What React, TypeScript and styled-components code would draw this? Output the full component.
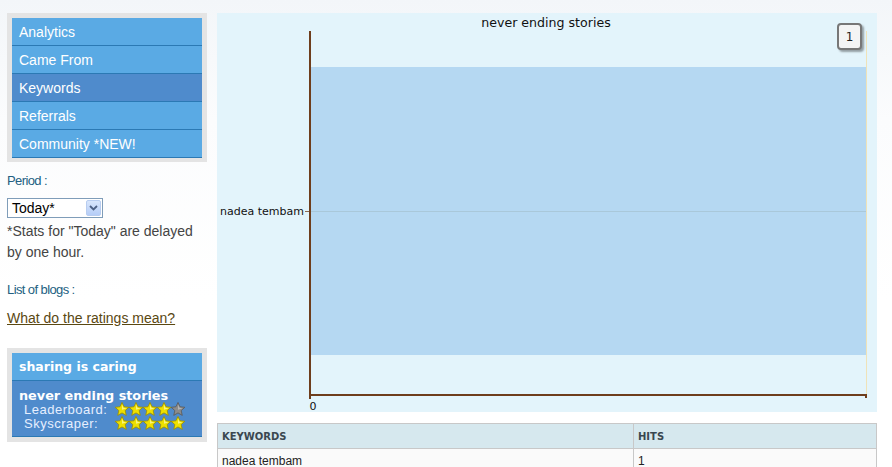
import styled, { createGlobalStyle } from "styled-components";

const GlobalStyle = createGlobalStyle`
    html, body {
        margin: 0;
        padding: 0;
    }
    body {
        background: linear-gradient(to bottom, #f3f6f9 0px, #fbfcfd 120px, #ffffff 300px);
        font-family: "Liberation Sans", Arial, sans-serif;
        min-height: 467px;
    }
`;

const NAV = ["Analytics", "Came From", "Keywords", "Referrals", "Community *NEW!"];
const ACTIVE = "Keywords";

const Page = styled.div`
    display: flex;
    align-items: flex-start;
    gap: 10px;
    padding: 13px 0 0 7px;
`;

const Sidebar = styled.div`
    width: 200px;
    display: flex;
    flex-direction: column;
`;

const GrayBox = styled.div`
    background: #e4e4e4;
    padding: 5px 5px 4px;
`;

const NavItem = styled.div<{ $active: boolean }>`
    height: 27px;
    line-height: 28px;
    padding-left: 7px;
    font-size: 14px;
    color: #fff;
    background: ${p => p.$active ? "#4f8bcc" : "#5aaae4"};
    border-bottom: 1px solid #2b79b4;
`;

const Label = styled.div<{ $gap: number }>`
    color: #235f82;
    font-size: 13px;
    letter-spacing: -0.6px;
    margin-top: ${p => p.$gap}px;
`;

const FakeSelect = styled.div`
    margin-top: 10px;
    width: 90px;
    height: 18px;
    border: 1px solid #7f9db9;
    background: #fff;
    display: flex;
    align-items: center;
    justify-content: space-between;
    font-size: 14px;
    color: #000;
    padding-left: 4px;
    box-sizing: content-box;
`;

const SelectBtn = styled.div`
    width: 15px;
    height: 16px;
    margin-right: 1px;
    background: linear-gradient(#d8e6fc, #b5cdf7);
    border: 1px solid #b8cdf0;
    border-radius: 2px;
    display: flex;
    align-items: center;
    justify-content: center;
    box-sizing: border-box;
`;

const Note = styled.div`
    font-size: 14px;
    color: #444;
    line-height: 21px;
    margin-top: 3px;
`;

const RatingLink = styled.a`
    display: block;
    margin-top: 13px;
    font-size: 14px;
    color: #5a4812;
    text-decoration: underline;
`;

const ShareBox = styled(GrayBox)`
    margin-top: 22px;
    padding: 5px 5px 5px;
`;

const ShareHead = styled.div`
    height: 27px;
    line-height: 28px;
    padding-left: 7px;
    background: #5aaae4;
    border-bottom: 1px solid #2b79b4;
    color: #fff;
    font-family: "DejaVu Sans", Verdana, sans-serif;
    font-weight: bold;
    font-size: 12.5px;
`;

const ShareBody = styled.div`
    background: #4f8bcc;
    border-bottom: 1px solid #2b79b4;
    padding: 8px 7px 0;
    height: 47px;
    color: #fff;
`;

const BlogName = styled.div`
    font-family: "DejaVu Sans", Verdana, sans-serif;
    font-weight: bold;
    font-size: 12.8px;
    line-height: 13px;
    height: 13px;
`;

const RankRow = styled.div`
    display: flex;
    align-items: center;
    height: 14px;
    padding-left: 5px;
    font-size: 13px;
    letter-spacing: 0.5px;
    line-height: 13px;
    color: #e6efff;
`;

const RankName = styled.span`
    width: 91px;
`;

const Stars = styled.span`
    display: flex;
`;

const Main = styled.div`
    width: 660px;
    display: flex;
    flex-direction: column;
    gap: 11px;
`;

const ChartWrap = styled.div`
    position: relative;
    height: 399px;
    background: #e3f4fb;
`;

const Legend = styled.div`
    position: absolute;
    left: 620px;
    top: 10px;
    width: 21px;
    height: 23px;
    border: 2px solid #777;
    border-radius: 4px;
    background: #f4f4f4;
    box-shadow: 2px 2px 2px rgba(0, 0, 0, 0.35);
    font-family: "DejaVu Sans", Verdana, sans-serif;
    font-size: 12px;
    display: flex;
    align-items: center;
    justify-content: center;
    color: #222;
`;

const Table = styled.table`
    width: 660px;
    border-collapse: collapse;
    font-family: "Liberation Sans", Arial, sans-serif;
`;

const Th = styled.th<{ $w?: number }>`
    text-align: left;
    background: #d6e8ee;
    border: 1px solid #c8c8c8;
    height: 24px;
    padding: 0 4px;
    font-family: "DejaVu Sans", Verdana, sans-serif;
    font-size: 10px;
    font-weight: bold;
    color: #3a4750;
    width: ${p => p.$w ? `${p.$w}px` : "auto"};
`;

const Td = styled.td`
    background: #fafafa;
    border: 1px solid #c8c8c8;
    height: 24px;
    padding: 0 4px;
    font-size: 12px;
    color: #222;
`;

const Star = ({ on }: { on: boolean }) => (
    <svg width="14" height="14" viewBox="1 1 22 21">
        <path
            d="M12 1.2 L15.2 8 L22.8 8.8 L17 14 L18.7 21.5 L12 17.7 L5.3 21.5 L7 14 L1.2 8.8 L8.8 8 Z"
            fill={on ? "#eee000" : "#8c8c8c"}
            stroke={on ? "#9c8f00" : "#5a5a5a"}
            strokeWidth="1.3"
            strokeLinejoin="round"
        />
        <path
            d="M12 4.5 L14.2 9.6 L19.5 10.2 L12 12.5 Z"
            fill={on ? "#fffbb0" : "#c8c8c8"}
            opacity="0.7"
        />
    </svg>
);

const StarRow = ({ count }: { count: number }) => (
    <Stars>
        {[0, 1, 2, 3, 4].map(i => <Star key={i} on={i < count} />)}
    </Stars>
);

const Chart = () => (
    <ChartWrap>
        <svg width="660" height="399" style={{ display: "block" }}>
            <text x="329" y="14" textAnchor="middle" fontFamily="DejaVu Sans, Verdana, sans-serif" fontSize="12.6" fill="#111">
                never ending stories
            </text>
            <rect x="94" y="54" width="555" height="288" fill="#b5d8f2" />
            <line x1="94" y1="198.5" x2="649" y2="198.5" stroke="#a9c8da" strokeWidth="1" />
            <line x1="649.5" y1="18" x2="649.5" y2="382" stroke="#efe2b8" strokeWidth="1" />
            <line x1="88" y1="198.5" x2="93" y2="198.5" stroke="#8a6a50" strokeWidth="1" />
            <line x1="93" y1="18" x2="93" y2="383" stroke="#6e3d1c" strokeWidth="2" />
            <line x1="92" y1="382" x2="650" y2="382" stroke="#6e3d1c" strokeWidth="2" />
            <line x1="93" y1="382" x2="93" y2="386" stroke="#6e3d1c" strokeWidth="2" />
            <line x1="649" y1="382" x2="649" y2="385" stroke="#6e3d1c" strokeWidth="2" />
            <text x="87" y="202" textAnchor="end" fontFamily="DejaVu Sans, Verdana, sans-serif" fontSize="11" fill="#111">
                nadea tembam
            </text>
            <text x="96" y="397" textAnchor="middle" fontFamily="DejaVu Sans, Verdana, sans-serif" fontSize="11" fill="#111">
                0
            </text>
        </svg>
        <Legend>1</Legend>
    </ChartWrap>
);

export default function App() {
    return (
        <>
            <GlobalStyle />
            <Page>
                <Sidebar>
                    <GrayBox>
                        {NAV.map(n => <NavItem key={n} $active={n === ACTIVE}>{n}</NavItem>)}
                    </GrayBox>
                    <Label $gap={11}>Period :</Label>
                    <FakeSelect>
                        <span>Today*</span>
                        <SelectBtn>
                            <svg width="9" height="6" viewBox="0 0 9 6">
                                <path d="M1 1 L4.5 4.5 L8 1" fill="none" stroke="#4d6185" strokeWidth="1.8" />
                            </svg>
                        </SelectBtn>
                    </FakeSelect>
                    <Note>*Stats for "Today" are delayed by one hour.</Note>
                    <Label $gap={19}>List of blogs :</Label>
                    <RatingLink href="#">What do the ratings mean?</RatingLink>
                    <ShareBox>
                        <ShareHead>sharing is caring</ShareHead>
                        <ShareBody>
                            <BlogName>never ending stories</BlogName>
                            <RankRow><RankName>Leaderboard:</RankName><StarRow count={4} /></RankRow>
                            <RankRow><RankName>Skyscraper:</RankName><StarRow count={5} /></RankRow>
                        </ShareBody>
                    </ShareBox>
                </Sidebar>
                <Main>
                    <Chart />
                    <Table>
                        <thead>
                            <tr>
                                <Th $w={407}>KEYWORDS</Th>
                                <Th>HITS</Th>
                            </tr>
                        </thead>
                        <tbody>
                            <tr>
                                <Td>nadea tembam</Td>
                                <Td>1</Td>
                            </tr>
                        </tbody>
                    </Table>
                </Main>
            </Page>
        </>
    );
}
